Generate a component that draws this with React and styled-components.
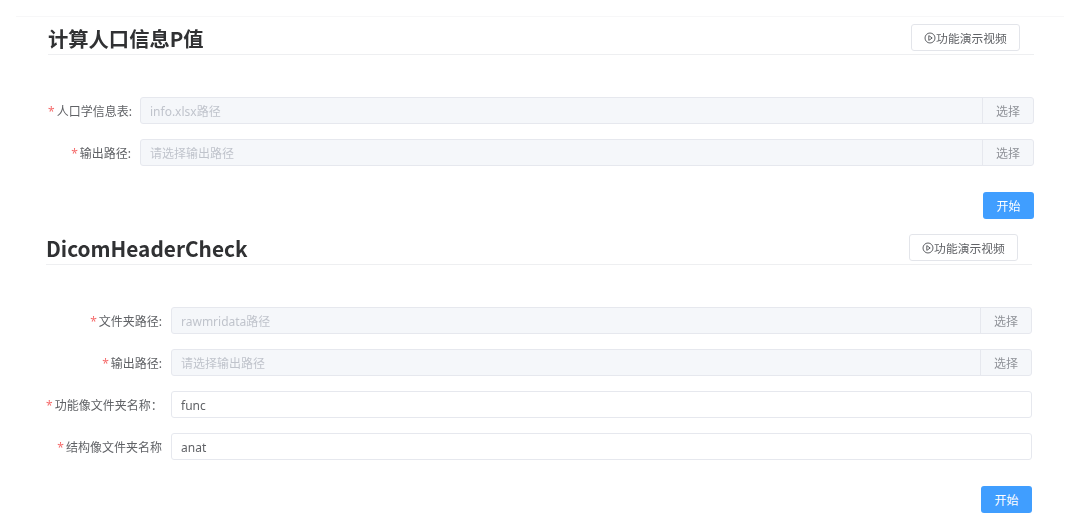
import styled, { createGlobalStyle } from "styled-components";

const GlobalStyle = createGlobalStyle`
  html, body {
    margin: 0;
    padding: 0;
    background: #fff;
  }
  body {
    font-family: "Noto Sans", "Noto Sans CJK SC", sans-serif;
  }
`;

const Page = styled.div`
  width: 1080px;
  height: 531px;
  overflow: hidden;
  padding: 16px 16px 0;
  box-sizing: border-box;
  filter: blur(0.4px);
`;

const TopLine = styled.div`
  height: 1px;
  background: #f7f7f8;
`;

const Section = styled.section`
  width: 986px;
  margin-left: ${(p) => p.$left}px;
  margin-top: ${(p) => p.$top}px;
`;

const Header = styled.header`
  height: 37px;
  display: flex;
  align-items: center;
  justify-content: space-between;
  padding-right: 14px;
  border-bottom: 1px solid #eeeff1;
`;

const Title = styled.h2`
  margin: 4px 0 0;
  font-size: ${(p) => p.$size}px;
  line-height: 30px;
  font-weight: 600;
  color: #303133;
  font-family: "Noto Sans CJK SC", sans-serif;
`;

const DemoButton = styled.button`
  width: 109px;
  height: 27px;
  margin-top: 4px;
  padding: 0;
  display: flex;
  align-items: center;
  justify-content: center;
  background: #fff;
  border: 1px solid #e3e5ea;
  border-radius: 3px;
  color: #606266;
  font-size: 11.8px;
  font-family: "Noto Sans CJK SC", sans-serif;
`;

const PlayIcon = styled.svg`
  width: 12px;
  height: 12px;
  flex: none;
`;

const Form = styled.div`
  display: flex;
  flex-direction: column;
  gap: 15px;
  margin-top: 42px;
`;

const Row = styled.div`
  display: flex;
  align-items: center;
  height: 27px;
`;

const Label = styled.label`
  width: ${(p) => p.$width}px;
  flex: none;
  padding-right: 9px;
  box-sizing: border-box;
  text-align: right;
  white-space: nowrap;
  font-size: 12px;
  color: #606266;
  font-family: "Noto Sans", "Noto Sans CJK SC", sans-serif;

  &::before {
    content: "*";
    color: #f56c6c;
    margin-right: 2px;
  }
`;

const Field = styled.div`
  flex: 1;
  height: 27px;
  display: flex;
  box-sizing: border-box;
  border: 1px solid #e6e8ee;
  border-radius: 3px;
  background: ${(p) => (p.$disabled ? "#f5f7fa" : "#fff")};
  overflow: hidden;
`;

const Value = styled.div`
  flex: 1;
  padding-left: 9px;
  line-height: 27px;
  font-size: 12px;
  color: ${(p) => (p.$placeholder ? "#c0c4cc" : "#606266")};
  font-family: "Noto Sans", "Noto Sans CJK SC", sans-serif;
`;

const Append = styled.div`
  width: 50px;
  border-left: 1px solid #e6e8ee;
  text-align: center;
  line-height: 25px;
  font-size: 12px;
  color: #909399;
  font-family: "Noto Sans CJK SC", sans-serif;
`;

const Actions = styled.div`
  display: flex;
  justify-content: flex-end;
  margin-top: 26px;
`;

const StartButton = styled.button`
  width: 51px;
  height: 27px;
  padding: 0;
  border: none;
  border-radius: 3px;
  background: #409eff;
  color: #fff;
  font-size: 12px;
  font-family: "Noto Sans CJK SC", sans-serif;
`;

const sections = [
  {
    title: "计算人口信息P值",
    titleSize: 20.3,
    left: 32,
    top: 0,
    labelWidth: 92,
    rows: [
      { label: "人口学信息表:", value: "info.xlsx路径", select: true },
      { label: "输出路径:", value: "请选择输出路径", select: true },
    ],
  },
  {
    title: "DicomHeaderCheck",
    titleSize: 20.8,
    left: 30,
    top: 8,
    labelWidth: 125,
    rows: [
      { label: "文件夹路径:", value: "rawmridata路径", select: true },
      { label: "输出路径:", value: "请选择输出路径", select: true },
      { label: "功能像文件夹名称：", value: "func" },
      { label: "结构像文件夹名称", value: "anat" },
    ],
  },
];

export default function App() {
  return (
    <Page>
      <GlobalStyle />
      <TopLine />
      {sections.map((section) => (
        <Section key={section.title} $left={section.left} $top={section.top}>
          <Header>
            <Title $size={section.titleSize}>{section.title}</Title>
            <DemoButton>
              <PlayIcon viewBox="0 0 12 12" fill="none" stroke="#606266" strokeWidth="1">
                <circle cx="6" cy="6" r="5" />
                <path d="M4.8 3.6 L8.2 6 L4.8 8.4 Z" />
              </PlayIcon>
              功能演示视频
            </DemoButton>
          </Header>
          <Form>
            {section.rows.map((row) => (
              <Row key={row.label}>
                <Label $width={section.labelWidth}>{row.label}</Label>
                <Field $disabled={row.select}>
                  <Value $placeholder={row.select}>{row.value}</Value>
                  {row.select && <Append>选择</Append>}
                </Field>
              </Row>
            ))}
          </Form>
          <Actions>
            <StartButton>开始</StartButton>
          </Actions>
        </Section>
      ))}
    </Page>
  );
}
